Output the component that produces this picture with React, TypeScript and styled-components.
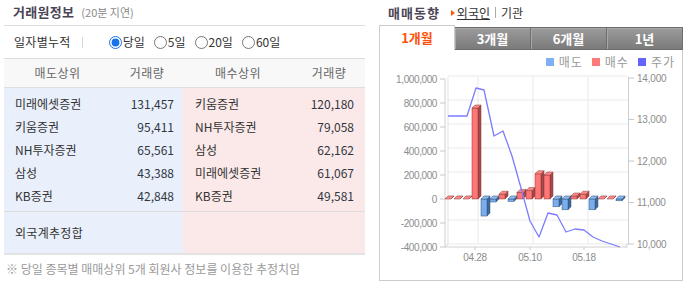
import React from "react";
import styled, { createGlobalStyle } from "styled-components";

const Global = createGlobalStyle`
  html, body { margin: 0; padding: 0; background: #fff; }
  body { font-family: "Noto Sans CJK KR", "Noto Sans", sans-serif; font-size: 12px; color: #333; }
  * { box-sizing: border-box; }
`;

const Page = styled.div`
  display: flex;
  align-items: flex-start;
  padding-left: 4px;
  gap: 14px;
  height: 299px;
  overflow: hidden;
`;

const Left = styled.section`
  width: 361px;
  display: flex;
  flex-direction: column;
`;

const TitleBar = styled.div`
  height: 26px;
  border-bottom: 1px solid #dcdcdc;
  display: flex;
  align-items: center;
  padding: 0 0 1px 9px;
  gap: 7px;
`;

const Title = styled.h2`
  margin: 0;
  font-size: 13px;
  font-weight: 700;
  color: #4b4656;
  line-height: 16px;
  letter-spacing: 0.3px;
`;

const Sub = styled.span`
  font-size: 11px;
  color: #8a8a8a;
  line-height: 14px;
`;

const FilterRow = styled.div`
  height: 32px;
  display: flex;
  align-items: center;
  padding-left: 10px;
`;

const FilterLabel = styled.span`
  font-size: 12px;
  line-height: 14px;
  color: #333;
  letter-spacing: 0.3px;
`;

const Sep = styled.span`
  width: 1px;
  height: 11px;
  background: #d6d6d6;
  margin: 0 26px 0 11px;
`;

const RadioGroup = styled.div`
  display: flex;
  align-items: center;
  gap: 9px;
`;

const RadioLabel = styled.label`
  display: flex;
  align-items: center;
  font-size: 12px;
  line-height: 14px;
  color: #333;
  input {
    margin: 0 1px 0 0;
    width: 13px;
    height: 13px;
    accent-color: #1a73e8;
  }
`;

const Table = styled.div`
  border-top: 1px solid #dcdcdc;
  border-bottom: 2px solid #e3e3e3;
`;

const HeadRow = styled.div`
  display: grid;
  grid-template-columns: 107px 72px 110px 72px;
  height: 29px;
  background: #f8f8f8;
  border-bottom: 1px solid #dedede;
  align-items: center;
`;

const HeadCell = styled.div`
  text-align: center;
  font-size: 12px;
  line-height: 14px;
  color: #666;
  letter-spacing: 0.4px;
`;

const Body = styled.div`
  display: grid;
  grid-template-columns: 179px 182px;
`;

const Half = styled.div<{ $side: "sell" | "buy" }>`
  background: ${(p) => (p.$side === "sell" ? "#e9f0fb" : "#fbe9e9")};
  display: flex;
  flex-direction: column;
`;

const List = styled.ul<{ $side: "sell" | "buy" }>`
  list-style: none;
  margin: 0;
  padding: ${(p) => (p.$side === "sell" ? "4px 9px 4px 11px" : "4px 11px 4px 12px")};
  border-bottom: 1px solid #dcdcdc;
`;

const Row = styled.li`
  height: 23px;
  display: flex;
  align-items: center;
  justify-content: space-between;
  font-size: 12px;
  line-height: 14px;
`;

const Firm = styled.span`
  color: #333;
`;

const Volume = styled.span`
  color: #2f3640;
  font-size: 12px;
`;

const ForeignRow = styled.div`
  height: 41px;
  display: flex;
  align-items: center;
  padding-left: 11px;
  font-size: 12px;
  line-height: 14px;
  color: #333;
  letter-spacing: 0.3px;
`;

const Note = styled.p`
  margin: 4px 0 0 2px;
  font-size: 12px;
  line-height: 20px;
  color: #9a9a9a;
`;

const SectionTitle = styled.h3`
  margin: 19px 0 0 11px;
  font-size: 14px;
  line-height: 20px;
  font-weight: 700;
  color: #333;
`;

const Accent = styled.span`
  color: #ff5a00;
  margin-right: 6px;
`;

const Right = styled.section`
  width: 304px;
  display: flex;
  flex-direction: column;
`;

const RightHeader = styled.div`
  height: 25px;
  display: flex;
  align-items: center;
  padding-left: 9px;
`;

const RightTitle = styled.h2`
  margin: 0 11px 0 0;
  font-size: 13px;
  font-weight: 700;
  color: #4b4656;
  line-height: 16px;
  letter-spacing: 1px;
`;

const Marker = styled.span`
  width: 0;
  height: 0;
  border-left: 4px solid #ff5a00;
  border-top: 3px solid transparent;
  border-bottom: 3px solid transparent;
  margin-right: 2px;
`;

const InvLink = styled.a<{ $active?: boolean }>`
  font-size: 12px;
  line-height: 14px;
  color: #333;
  text-decoration: ${(p) => (p.$active ? "underline" : "none")};
`;

const Pipe = styled.span`
  width: 1px;
  height: 11px;
  background: #aaa;
  margin: 0 5px;
`;

const TabBar = styled.div`
  display: flex;
  align-items: flex-end;
  height: 25px;
`;

const Tab = styled.button<{ $active?: boolean }>`
  width: 76px;
  padding: 0;
  font-family: inherit;
  font-size: 13px;
  font-weight: 700;
  line-height: 14px;
  ${(p) =>
    p.$active
      ? `
    height: 25px;
    background: #fff;
    color: #ff4f0a;
    border: 1px solid #cccccc;
    border-bottom: none;
  `
      : `
    height: 23px;
    background: linear-gradient(#9b9b9b, #7b7b7b);
    color: #fff;
    border: 1px solid #6d6d6d;
    border-left: none;
    box-shadow: inset 1px 1px 0 #a8a8a8;
  `}
`;

const ChartBox = styled.div`
  border: 1px solid #cccccc;
  border-top: none;
  height: 231px;
  display: flex;
  flex-direction: column;
`;

const Legend = styled.div`
  height: 20px;
  display: flex;
  justify-content: flex-end;
  align-items: center;
  padding: 3px 7px 0 0;
  gap: 9px;
`;

const LegendItem = styled.span<{ $color: string }>`
  display: flex;
  align-items: center;
  gap: 5px;
  font-size: 12px;
  line-height: 14px;
  color: #999;
  letter-spacing: 1px;
  &::before {
    content: "";
    width: 8px;
    height: 8px;
    background: ${(p) => p.$color};
  }
`;

const sellRows: [string, string][] = [
  ["미래에셋증권", "131,457"],
  ["키움증권", "95,411"],
  ["NH투자증권", "65,561"],
  ["삼성", "43,388"],
  ["KB증권", "42,848"],
];
const buyRows: [string, string][] = [
  ["키움증권", "120,180"],
  ["NH투자증권", "79,058"],
  ["삼성", "62,162"],
  ["미래에셋증권", "61,067"],
  ["KB증권", "49,581"],
];

const yL = (v: number) => 199 - (v * 24) / 200;
const yR = (v: number) => 244 - ((v - 10000) * 41.5) / 1000;

const barValues = [0, 0, 0, 758, -142, -25, 40, -20, 55, 70, 210, 200, -65, -90, 25, 40, -90, 0, 0, -15];
const pricePts: [number, number][] = [
  [448, 116], [458, 116], [467, 116], [476, 88], [484, 90], [494, 136], [503, 131],
  [512, 156], [521, 188], [530, 221], [539, 237], [548, 213], [557, 215], [566, 232],
  [575, 229], [584, 230], [593, 237], [602, 241], [611, 244], [620, 247],
];

const Bar: React.FC<{ i: number; v: number }> = ({ i, v }) => {
  const x = 445 + 9 * i;
  const w = 6;
  const d = 3;
  const yv = yL(v);
  const top = Math.min(199, yv);
  const bot = Math.max(199, yv);
  const pos = v >= 0;
  const front = pos ? "#ff7676" : "#79aded";
  const side = pos ? "#a44a4a" : "#3f6797";
  const topc = pos ? "#ff8a8a" : "#8dbaf0";
  const edge = pos ? "#8a3434" : "#35557d";
  return (
    <g stroke={edge} strokeWidth={0.5}>
      <polygon points={`${x + w},${top} ${x + w + d},${top - d} ${x + w + d},${bot - d} ${x + w},${bot}`} fill={side} />
      {bot - top > 0.5 && <rect x={x} y={top} width={w} height={bot - top} fill={front} />}
      <polygon points={`${x},${top} ${x + w},${top} ${x + w + d},${top - d} ${x + d},${top - d}`} fill={topc} />
    </g>
  );
};

const leftTicks = [1000, 800, 600, 400, 200, 0, -200, -400];
const fmt = (v: number) => (v * 1000).toLocaleString("en-US");
const rightTicks = [14000, 13000, 12000, 11000, 10000];

const Chart: React.FC = () => (
  <svg width={302} height={209} viewBox="0 0 302 209" style={{ display: "block" }}>
    <g transform="translate(-380,-70)" fontFamily="'Liberation Sans', Arial, sans-serif" fontSize={10} fill="#8c8c8c">
      {leftTicks.map((v) => (
        <line key={"g" + v} x1={448} x2={628} y1={yL(v) - 3} y2={yL(v) - 3} stroke="#e9e9e9" />
      ))}
      {[478, 533, 588].map((x) => (
        <line key={"v" + x} x1={x} x2={x} y1={77} y2={244} stroke="#e9e9e9" />
      ))}
      <line x1={448} x2={448} y1={77} y2={244} stroke="#e2e2e2" />
      <line x1={445} x2={628} y1={247} y2={247} stroke="#d0d0d0" />
      <line x1={445} x2={448} y1={247} y2={244} stroke="#d0d0d0" />
      <line x1={445} x2={445} y1={79} y2={247} stroke="#cfcfcf" />
      <line x1={628.5} x2={628.5} y1={77} y2={244} stroke="#cfcfcf" />
      <line x1={625} x2={628} y1={247} y2={244} stroke="#d0d0d0" />
      {leftTicks.map((v) => (
        <g key={"l" + v}>
          <line x1={440} x2={445} y1={yL(v)} y2={yL(v)} stroke="#c8c8c8" />
          <text x={437} y={yL(v) + 3.5} textAnchor="end" letterSpacing={-0.4}>
            {fmt(v)}
          </text>
        </g>
      ))}
      {rightTicks.map((v) => (
        <g key={"r" + v}>
          <line x1={628} x2={634} y1={yR(v)} y2={yR(v)} stroke="#c8c8c8" />
          <text x={637} y={yR(v) + 3.5} letterSpacing={-0.2}>
            {v.toLocaleString("en-US")}
          </text>
        </g>
      ))}
      {[
        [475, "04.28"],
        [530, "05.10"],
        [584, "05.18"],
      ].map(([x, t]) => (
        <g key={t as string}>
          <line x1={x as number} x2={x as number} y1={247} y2={250} stroke="#c8c8c8" />
          <text x={x as number} y={261} textAnchor="middle" letterSpacing={-0.3}>
            {t}
          </text>
        </g>
      ))}
      {barValues.map((v, i) => (
        <Bar key={i} i={i} v={v} />
      ))}
      <polyline
        points={pricePts.map((p) => p.join(",")).join(" ")}
        fill="none"
        stroke="#7c7cff"
        strokeWidth={1.3}
        strokeLinejoin="round"
      />
    </g>
  </svg>
);

const periods = ["당일", "5일", "20일", "60일"];
const tabs = ["1개월", "3개월", "6개월", "1년"];

export default function App() {
  return (
    <>
      <Global />
      <Page>
        <Left>
          <TitleBar>
            <Title>거래원정보</Title>
            <Sub>(20분 지연)</Sub>
          </TitleBar>
          <FilterRow>
            <FilterLabel>일자별누적</FilterLabel>
            <Sep />
            <RadioGroup>
              {periods.map((p, i) => (
                <RadioLabel key={p}>
                  <input type="radio" name="period" defaultChecked={i === 0} />
                  {p}
                </RadioLabel>
              ))}
            </RadioGroup>
          </FilterRow>
          <Table>
            <HeadRow>
              <HeadCell>매도상위</HeadCell>
              <HeadCell>거래량</HeadCell>
              <HeadCell>매수상위</HeadCell>
              <HeadCell>거래량</HeadCell>
            </HeadRow>
            <Body>
              <Half $side="sell">
                <List $side="sell">
                  {sellRows.map(([n, v]) => (
                    <Row key={n}>
                      <Firm>{n}</Firm>
                      <Volume>{v}</Volume>
                    </Row>
                  ))}
                </List>
                <ForeignRow>외국계추정합</ForeignRow>
              </Half>
              <Half $side="buy">
                <List $side="buy">
                  {buyRows.map(([n, v]) => (
                    <Row key={n}>
                      <Firm>{n}</Firm>
                      <Volume>{v}</Volume>
                    </Row>
                  ))}
                </List>
                <ForeignRow />
              </Half>
            </Body>
          </Table>
          <Note>※ 당일 종목별 매매상위 5개 회원사 정보를 이용한 추정치임</Note>
          <SectionTitle>
            <Accent>외국인 · 기관</Accent>순매매 거래량
          </SectionTitle>
        </Left>
        <Right>
          <RightHeader>
            <RightTitle>매매동향</RightTitle>
            <Marker />
            <InvLink $active>외국인</InvLink>
            <Pipe />
            <InvLink>기관</InvLink>
          </RightHeader>
          <TabBar>
            {tabs.map((t, i) => (
              <Tab key={t} $active={i === 0}>
                {t}
              </Tab>
            ))}
          </TabBar>
          <ChartBox>
            <Legend>
              <LegendItem $color="#7fb1f2">매도</LegendItem>
              <LegendItem $color="#ff7a7a">매수</LegendItem>
              <LegendItem $color="#6464ff">주가</LegendItem>
            </Legend>
            <Chart />
          </ChartBox>
        </Right>
      </Page>
    </>
  );
}
